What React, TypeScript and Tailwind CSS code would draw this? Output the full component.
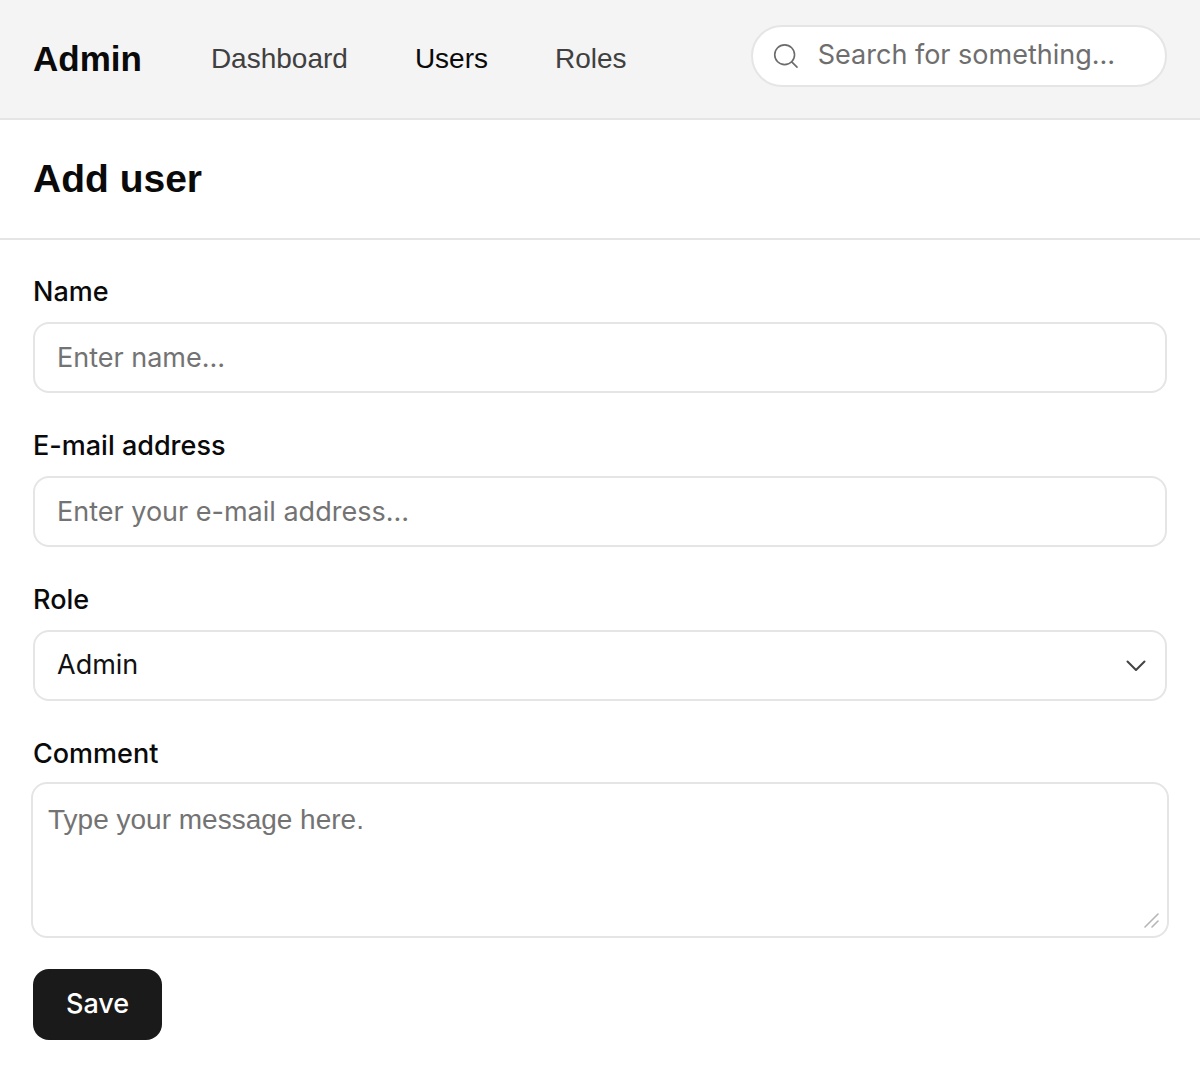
import React from 'react';

const inter = "font-['Inter','Noto_Sans',sans-serif]";
const arial = "font-['Liberation_Sans','Arial',sans-serif]";

function SearchIcon() {
  return (
    <svg width="34" height="34" viewBox="0 0 24 24" fill="none" stroke="#6b6b6b" strokeWidth="1.3" strokeLinecap="round" strokeLinejoin="round">
      <circle cx="11" cy="11" r="8" />
      <path d="m21 21-4.3-4.3" />
    </svg>
  );
}

function Chevron() {
  return (
    <svg width="20" height="12" viewBox="0 0 20 12" fill="none" stroke="#444" strokeWidth="2" strokeLinecap="round" strokeLinejoin="round">
      <path d="M1.5 1.5 10 10l8.5-8.5" />
    </svg>
  );
}

function ResizeGrip() {
  return (
    <svg width="18" height="18" viewBox="0 0 18 18" fill="none" stroke="#b5b5b5" strokeWidth="1.6" strokeLinecap="round">
      <path d="M3 16 16 3" />
      <path d="M10 16l6-6" />
    </svg>
  );
}

function Field({ label, children }: { label: string; children: React.ReactNode }) {
  return (
    <div className="flex flex-col">
      <label className={`${inter} text-[27px] leading-[42px] font-medium text-[#0a0a0a] mb-[9px]`}>{label}</label>
      {children}
    </div>
  );
}

const inputCls = `${inter} h-[71px] w-full rounded-[16px] border-2 border-[#e5e5e5] bg-white px-[22px] text-[27px] text-[#111] placeholder:text-[#737373] outline-none`;

export default function App() {
  return (
    <div className="min-h-screen bg-white">
      {/* Top bar */}
      <header className="flex h-[120px] items-center border-b-2 border-[#e5e5e5] bg-[#f4f4f4] px-[33px]">
        <div className={`${arial} text-[35px] font-bold text-[#0a0a0a]`}>Admin</div>
        <nav className={`${arial} ml-[69px] flex items-center gap-[67px] text-[28px]`}>
          <a className="text-[#404040]">Dashboard</a>
          <a className="text-[#0a0a0a]">Users</a>
          <a className="text-[#404040]">Roles</a>
        </nav>
        <div className="ml-auto -mt-[7px] flex h-[62px] w-[416px] items-center gap-[17px] rounded-full border-2 border-[#e5e5e5] bg-white pl-[18px] pr-[20px]">
          <SearchIcon />
          <input
            className={`${inter} w-full bg-transparent text-[27px] text-[#111] placeholder:text-[#6e6e6e] outline-none`}
            placeholder="Search for something…"
          />
        </div>
      </header>

      {/* Page title */}
      <div className="flex h-[120px] items-center border-b-2 border-[#e5e5e5] px-[33px]">
        <h1 className={`${arial} text-[39px] font-bold text-[#0a0a0a]`}>Add user</h1>
      </div>

      {/* Form */}
      <form className="flex flex-col gap-[32px] px-[33px] pt-[31px] pb-[33px]">
        <Field label="Name">
          <input className={inputCls} placeholder="Enter name…" />
        </Field>
        <Field label="E-mail address">
          <input className={inputCls} placeholder="Enter your e-mail address…" />
        </Field>
        <Field label="Role">
          <div className="relative">
            <select className={`${inputCls} appearance-none`} defaultValue="admin">
              <option value="admin">Admin</option>
              <option value="editor">Editor</option>
              <option value="viewer">Viewer</option>
            </select>
            <span className="pointer-events-none absolute right-[21px] top-1/2 -translate-y-1/2">
              <Chevron />
            </span>
          </div>
        </Field>
        <Field label="Comment">
          <div className="relative -mx-[2px] -mt-[2px]">
            <textarea
              className={`${arial} block h-[156px] w-full resize-none rounded-[16px] border-2 border-[#e5e5e5] bg-white px-[15px] py-[15px] text-[28px] text-[#111] placeholder:text-[#737373] outline-none`}
              placeholder="Type your message here."
            />
            <span className="pointer-events-none absolute right-[9px] bottom-[9px]">
              <ResizeGrip />
            </span>
          </div>
        </Field>
        <div className="-mt-[1px]">
          <button type="button" className={`${inter} h-[71px] rounded-[16px] bg-[#1a1a1a] px-[33px] text-[27px] font-medium text-white`}>
            Save
          </button>
        </div>
      </form>
    </div>
  );
}
